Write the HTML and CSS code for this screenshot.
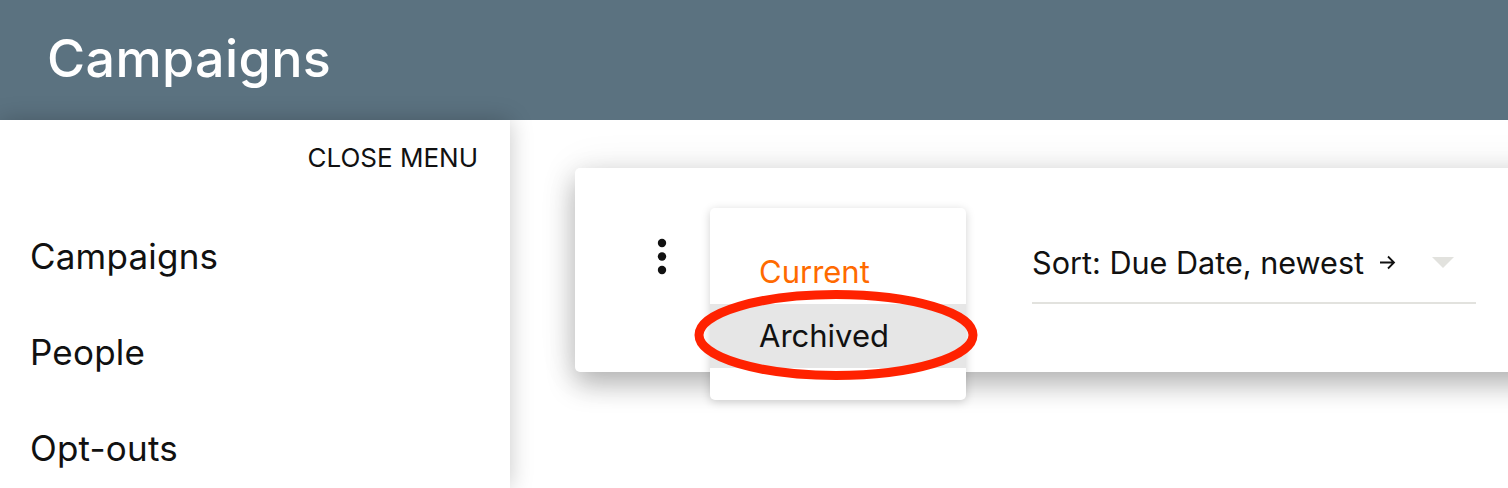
FILE: index.html
```html
<!DOCTYPE html>
<html lang="en">
<head>
  <meta charset="UTF-8" />
  <meta name="viewport" content="width=device-width, initial-scale=1.0" />
  <title>Campaigns</title>
  <link rel="stylesheet" href="styles.css">
</head>
<body>
  <header class="app-bar">
    <h1>Campaigns</h1>
  </header>

  <div class="layout">
    <nav class="drawer">
      <button class="close-menu">CLOSE MENU</button>
      <ul class="nav-list">
        <li>Campaigns</li>
        <li>People</li>
        <li>Opt-outs</li>
      </ul>
    </nav>

    <main class="content">
      <section class="toolbar-card">
        <button class="more-btn" aria-label="More">
          <svg width="48" height="48" viewBox="0 0 48 48">
            <circle cx="24" cy="11" r="4.2" />
            <circle cx="24" cy="24.5" r="4.2" />
            <circle cx="24" cy="38" r="4.2" />
          </svg>
        </button>

        <div class="sort-select">
          <span class="sort-label">Sort: Due Date, newest</span>
          <svg class="sort-arrow" width="17" height="17" viewBox="0 0 17 17">
            <path d="M1 8.5h14M9 2.5l6 6-6 6" />
          </svg>
          <svg class="drop-arrow" width="22" height="11" viewBox="0 0 22 11">
            <path d="M0 0h22L11 11z" />
          </svg>
        </div>

        <!-- popup opened from the more button -->
        <ul class="filter-menu">
          <li class="selected">Current</li>
          <li class="hovered">Archived</li>
        </ul>

        <svg class="annotation" width="300" height="100" viewBox="0 0 300 100">
          <ellipse cx="150" cy="50" rx="137" ry="40.5" />
        </svg>
      </section>
    </main>
  </div>
</body>
</html>
```

FILE: styles.css
```css
body {
  margin: 0;
  font-family: 'Inter', 'Noto Sans', sans-serif;
  color: #111;
  background: #fff;
  overflow: hidden;
  height: 100vh;
  display: flex;
  flex-direction: column;
}
.app-bar {
  height: 120px;
  flex-shrink: 0;
  background: #5b7280;
  display: flex;
  align-items: center;
  padding-left: 47px;
}
.app-bar h1 {
  margin: 0 0 4px;
  font-size: 52px;
  font-weight: 500;
  color: #fff;
  letter-spacing: 0.4px;
}
.layout {
  flex: 1;
  display: flex;
  min-height: 0;
}
.drawer {
  width: 510px;
  flex-shrink: 0;
  background: #fff;
  box-shadow: 0 0 22px rgba(0, 0, 0, 0.22);
  position: relative;
  z-index: 2;
  display: flex;
  flex-direction: column;
}
.close-menu {
  align-self: flex-end;
  margin: 14px 32px 0 0;
  padding: 0;
  border: none;
  background: none;
  font-family: inherit;
  font-size: 26px;
  line-height: 48px;
  color: #111;
  cursor: pointer;
}
.nav-list {
  list-style: none;
  margin: 26px 0 0;
  padding: 0 0 0 30px;
}
.nav-list li {
  font-size: 35px;
  line-height: 96px;
  letter-spacing: 0.2px;
}
.content {
  flex: 1;
  min-width: 0;
  overflow: hidden;
  padding: 48px 0 0 65px;
}
.toolbar-card {
  position: relative;
  width: 1100px;
  height: 204px;
  box-sizing: border-box;
  padding: 64px 0 0 63px;
  background: #fff;
  border-radius: 5px;
  box-shadow: 0 12px 28px rgba(0, 0, 0, 0.28), 0 0 40px rgba(0, 0, 0, 0.08);
  display: flex;
  align-items: flex-start;
}
.more-btn {
  width: 48px;
  height: 48px;
  padding: 0;
  border: none;
  background: none;
  fill: #111;
}
.more-btn svg {
  display: block;
}
.sort-select {
  margin-left: 346px;
  width: 444px;
  height: 72px;
  box-sizing: border-box;
  border-bottom: 2px solid #e2e2de;
  display: flex;
  align-items: center;
  padding-bottom: 9px;
}
.sort-label {
  font-size: 30.6px;
}
.sort-arrow {
  margin-left: 15px;
  fill: none;
  stroke: #111;
  stroke-width: 1.8;
}
.drop-arrow {
  margin-left: 36px;
  fill: #e2e2de;
}
.filter-menu {
  position: absolute;
  left: 135px;
  top: 40px;
  width: 256px;
  margin: 0;
  padding: 32px 0;
  list-style: none;
  background: #fff;
  border-radius: 5px;
  box-shadow: 0 2px 10px rgba(0, 0, 0, 0.18);
  z-index: 3;
}
.filter-menu li {
  height: 64px;
  line-height: 64px;
  padding-left: 49px;
  font-size: 31px;
}
.filter-menu .selected {
  color: #ff6a00;
}
.filter-menu .hovered {
  background: #e6e6e6;
}
.annotation {
  position: absolute;
  left: 111px;
  top: 117px;
  z-index: 4;
  fill: none;
  stroke: #ff2200;
  stroke-width: 9;
}
```
